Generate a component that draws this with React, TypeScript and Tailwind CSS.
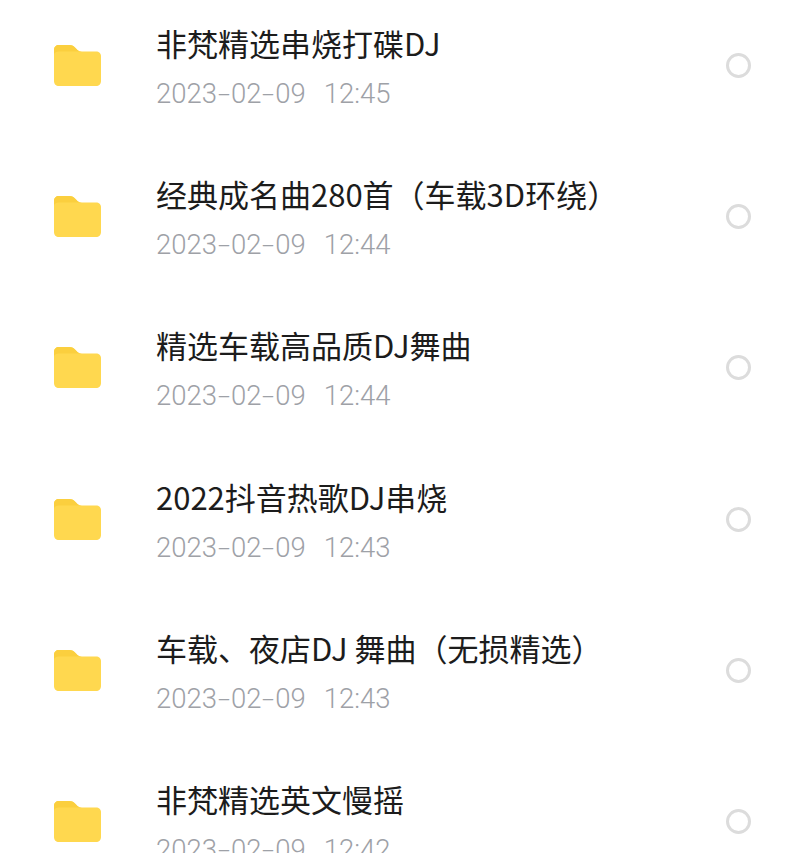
const folders = [
  { name: '非梵精选串烧打碟DJ', date: ['2023', '02', '09'], time: '12:45' },
  { name: '经典成名曲280首（车载3D环绕）', date: ['2023', '02', '09'], time: '12:44' },
  { name: '精选车载高品质DJ舞曲', date: ['2023', '02', '09'], time: '12:44' },
  { name: '2022抖音热歌DJ串烧', date: ['2023', '02', '09'], time: '12:43' },
  { name: '车载、夜店DJ 舞曲（无损精选）', date: ['2023', '02', '09'], time: '12:43' },
  { name: '非梵精选英文慢摇', date: ['2023', '02', '09'], time: '12:42' }
];

const FolderIcon = () => (
  <svg width="47" height="41" viewBox="0 0 47 41" className="shrink-0">
    <path d="M0 5C0 2 2 0 5 0H15C18 0 20 1 22 3.500C23.500 5.500 25 6.500 28 6.500H42C45 6.500 47 8.500 47 11V36C47 39 45 41 42 41H5C2 41 0 39 0 36Z" fill="#ffd84f" />
    <path d="M0 5C0 2 2 0 5 0H15C18 0 20 1 22 3.500C23.500 5.500 25 6.500 28 6.500H5C2 6.500 0 8 0 10Z" fill="#fbcf3e" />
  </svg>
);

const Dash = () => <span className="mx-[3px] inline-block scale-x-[1.6]">-</span>;

export default function App() {
  return (
    <div className="h-[853px] w-[800px] overflow-hidden bg-white font-['Noto_Sans_CJK_SC','Noto_Sans',sans-serif]">
      <div className="-mt-[10px]">
        {folders.map((folder) => (
          <div key={folder.name} className="flex h-[151.2px] items-center pl-[54px] pr-[49px]">
            <FolderIcon />
            <div className="ml-[55px] min-w-0 flex-1 pt-[6px]">
              <p className="whitespace-nowrap text-[31px] leading-[48px] text-[#1c1c1c]">{folder.name}</p>
              <p className="mt-[3px] whitespace-pre font-['Roboto','Noto_Sans',sans-serif] text-[27.5px] leading-[48px] font-light text-[#9ea1a7]">
                {folder.date[0]}
                <Dash />
                {folder.date[1]}
                <Dash />
                {folder.date[2]}
                <span className="ml-[18px]">{folder.time}</span>
              </p>
            </div>
            <div className="h-[25px] w-[25px] shrink-0 rounded-full border-[3px] border-[#dcdcdc]" />
          </div>
        ))}
      </div>
    </div>
  );
}
